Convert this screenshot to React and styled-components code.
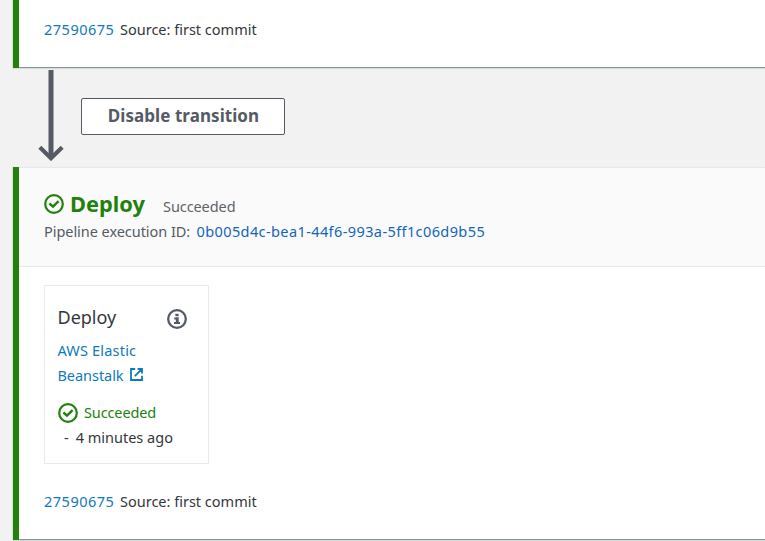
import React from 'react';
import styled, { createGlobalStyle } from 'styled-components';

const Global = createGlobalStyle`
  * { box-sizing: border-box; }
  body {
    margin: 0;
    background: #f2f2f2;
    color: #33373c;
    font-family: "Noto Sans", "Open Sans", sans-serif;
    font-size: 14.5px;
    overflow: hidden;
  }
  svg { display: block; flex: none; }
`;

const Page = styled.main`
  width: 765px;
  height: 541px;
  padding-left: 13px;
  overflow: hidden;
`;

const Stage = styled.section`
  height: ${(p) => p.$height}px;
  border-left: 6px solid #22810c;
  background: #fff;
  box-shadow: inset 0 -1px 0 #879596, 0 1px 1px #d9dcdc, -1px 0 1px #dfe3df;
`;

const StageHeader = styled.header`
  height: 100px;
  padding: 21px 0 0 25px;
  background: #fafafa;
  border-top: 1px solid #e6e9e9;
  border-bottom: 1px solid #e6e9e9;
`;

const Text = styled.span`
  display: block;
  flex: none;
  white-space: nowrap;
  color: ${(p) => p.$color || 'inherit'};
  font-size: ${(p) => p.$size || 14.5}px;
  font-weight: ${(p) => p.$weight || 400};
  letter-spacing: ${(p) => p.$track || 0}px;
  line-height: ${(p) => p.$line || 24}px;
`;

const Link = styled(Text).attrs({ as: 'a' })`
  color: ${(p) => p.$color || '#0f79be'};
  text-decoration: none;
`;

const Row = styled.div`
  display: flex;
  align-items: center;
  height: ${(p) => p.$height || 24}px;
  gap: ${(p) => p.$gap || 0}px;
`;

const Revision = styled.div`
  display: flex;
  padding: ${(p) => p.$top}px 0 0 25px;
`;

const RevisionLink = styled(Link)`
  width: 76px;
`;

const StageTitle = styled(Text).attrs({ as: 'h2' })`
  width: 93px;
  margin: 0 0 0 6px;
`;

const StageStatus = styled(Text)`
  padding-top: 4px;
`;

const IdLabel = styled(Text)`
  width: 152.5px;
`;

const Transition = styled.div`
  display: flex;
  height: 99px;
  padding-left: 25px;
`;

const DisableButton = styled.button`
  width: 204px;
  height: 37px;
  margin: 30px 0 0 17px;
  padding: 0 0 2px 1px;
  border: 1px solid #545b64;
  border-radius: 2px;
  background: #fff;
  color: #545b64;
  font: 700 17px/33px "Noto Sans", sans-serif;
  letter-spacing: 0.06px;
  white-space: nowrap;
`;

const ActionCard = styled.article`
  width: 165px;
  height: 179px;
  margin: 18px 0 0 25px;
  padding: 18px 12px 0 12.5px;
  border: 1px solid #eaeaea;
`;

const CardHeader = styled.div`
  display: flex;
  justify-content: space-between;
  align-items: center;
  height: 28px;
  padding-right: 9px;
  margin-bottom: 6px;
`;

const CardTitle = styled(Text).attrs({ as: 'h3' })`
  margin: -2px 0 0;
`;

const InfoButton = styled.span`
  margin-top: 2px;
`;

const ExternalMark = styled.span`
  margin-bottom: 2px;
`;

const Status = styled(Row)`
  margin-top: 12px;
`;

const Time = styled.div`
  display: flex;
  padding-left: 6.5px;
  gap: 7px;
`;

const CheckIcon = () => (
  <svg width="20" height="20" viewBox="0 0 20 20" fill="none" stroke="#22810c">
    <circle cx="10" cy="10" r="8.8" strokeWidth="2.2" />
    <path d="M5.4 9.5 9 12.7 14.6 7.2" strokeWidth="2.4" />
  </svg>
);

const InfoIcon = () => (
  <svg width="20" height="20" viewBox="0 0 20 20" fill="none" stroke="#545b64">
    <circle cx="10" cy="10" r="8.8" strokeWidth="2.3" />
    <path d="M8.4 6h3.2" strokeWidth="2.4" />
    <path d="M7.2 9.4h3v4M7 13.9h6" strokeWidth="2" />
    <path d="M10.2 8.4v5.5" strokeWidth="2.8" />
  </svg>
);

const ExternalIcon = () => (
  <svg width="13" height="13" viewBox="0 0 13 13" fill="none" stroke="#0f79be" strokeWidth="1.8">
    <path d="M5.2 1H1v11h11V7.8M7.6 1H12v4.4M11.8 1.2 4.8 8.2" />
  </svg>
);

const ArrowIcon = () => (
  <svg width="26" height="93" viewBox="0 0 26 93" fill="none" stroke="#545b64">
    <path d="M13 2v88" strokeWidth="5" />
    <path d="M1.8 79.2 13 90.2 24.2 79.2" strokeWidth="4.2" />
  </svg>
);

const SourceRevision = ({ top }) => (
  <Revision $top={top}>
    <RevisionLink $track={0.5}>27590675</RevisionLink>
    <Text>Source: first commit</Text>
  </Revision>
);

export default function App() {
  return (
    <>
      <Global />
      <Page>
        <Stage $height={68}>
          <SourceRevision top={17} />
        </Stage>
        <Transition>
          <ArrowIcon />
          <DisableButton>Disable transition</DisableButton>
        </Transition>
        <Stage $height={373}>
          <StageHeader>
            <Row $height={30}>
              <CheckIcon />
              <StageTitle $color="#22810c" $size={21.8} $weight={700} $line={30}>Deploy</StageTitle>
              <StageStatus $color="#5f6368" $track={-0.08}>Succeeded</StageStatus>
            </Row>
            <Row>
              <IdLabel $color="#545b64" $track={-0.05}>Pipeline execution ID:</IdLabel>
              <Link $color="#1166bb" $track={0.4}>0b005d4c-bea1-44f6-993a-5ff1c06d9b55</Link>
            </Row>
          </StageHeader>
          <ActionCard>
            <CardHeader>
              <CardTitle $size={18} $line={28}>Deploy</CardTitle>
              <InfoButton><InfoIcon /></InfoButton>
            </CardHeader>
            <Link $line={25} $track={0.18}>AWS Elastic</Link>
            <Row $height={25} $gap={6.5}>
              <Link $line={25} $track={-0.05}>Beanstalk</Link>
              <ExternalMark><ExternalIcon /></ExternalMark>
            </Row>
            <Status $height={25} $gap={6.5}>
              <CheckIcon />
              <Text $color="#22810c" $line={25} $track={-0.12}>Succeeded</Text>
            </Status>
            <Time>
              <Text $line={25}>-</Text>
              <Text $line={25}>4 minutes ago</Text>
            </Time>
          </ActionCard>
          <SourceRevision top={25} />
        </Stage>
      </Page>
    </>
  );
}
